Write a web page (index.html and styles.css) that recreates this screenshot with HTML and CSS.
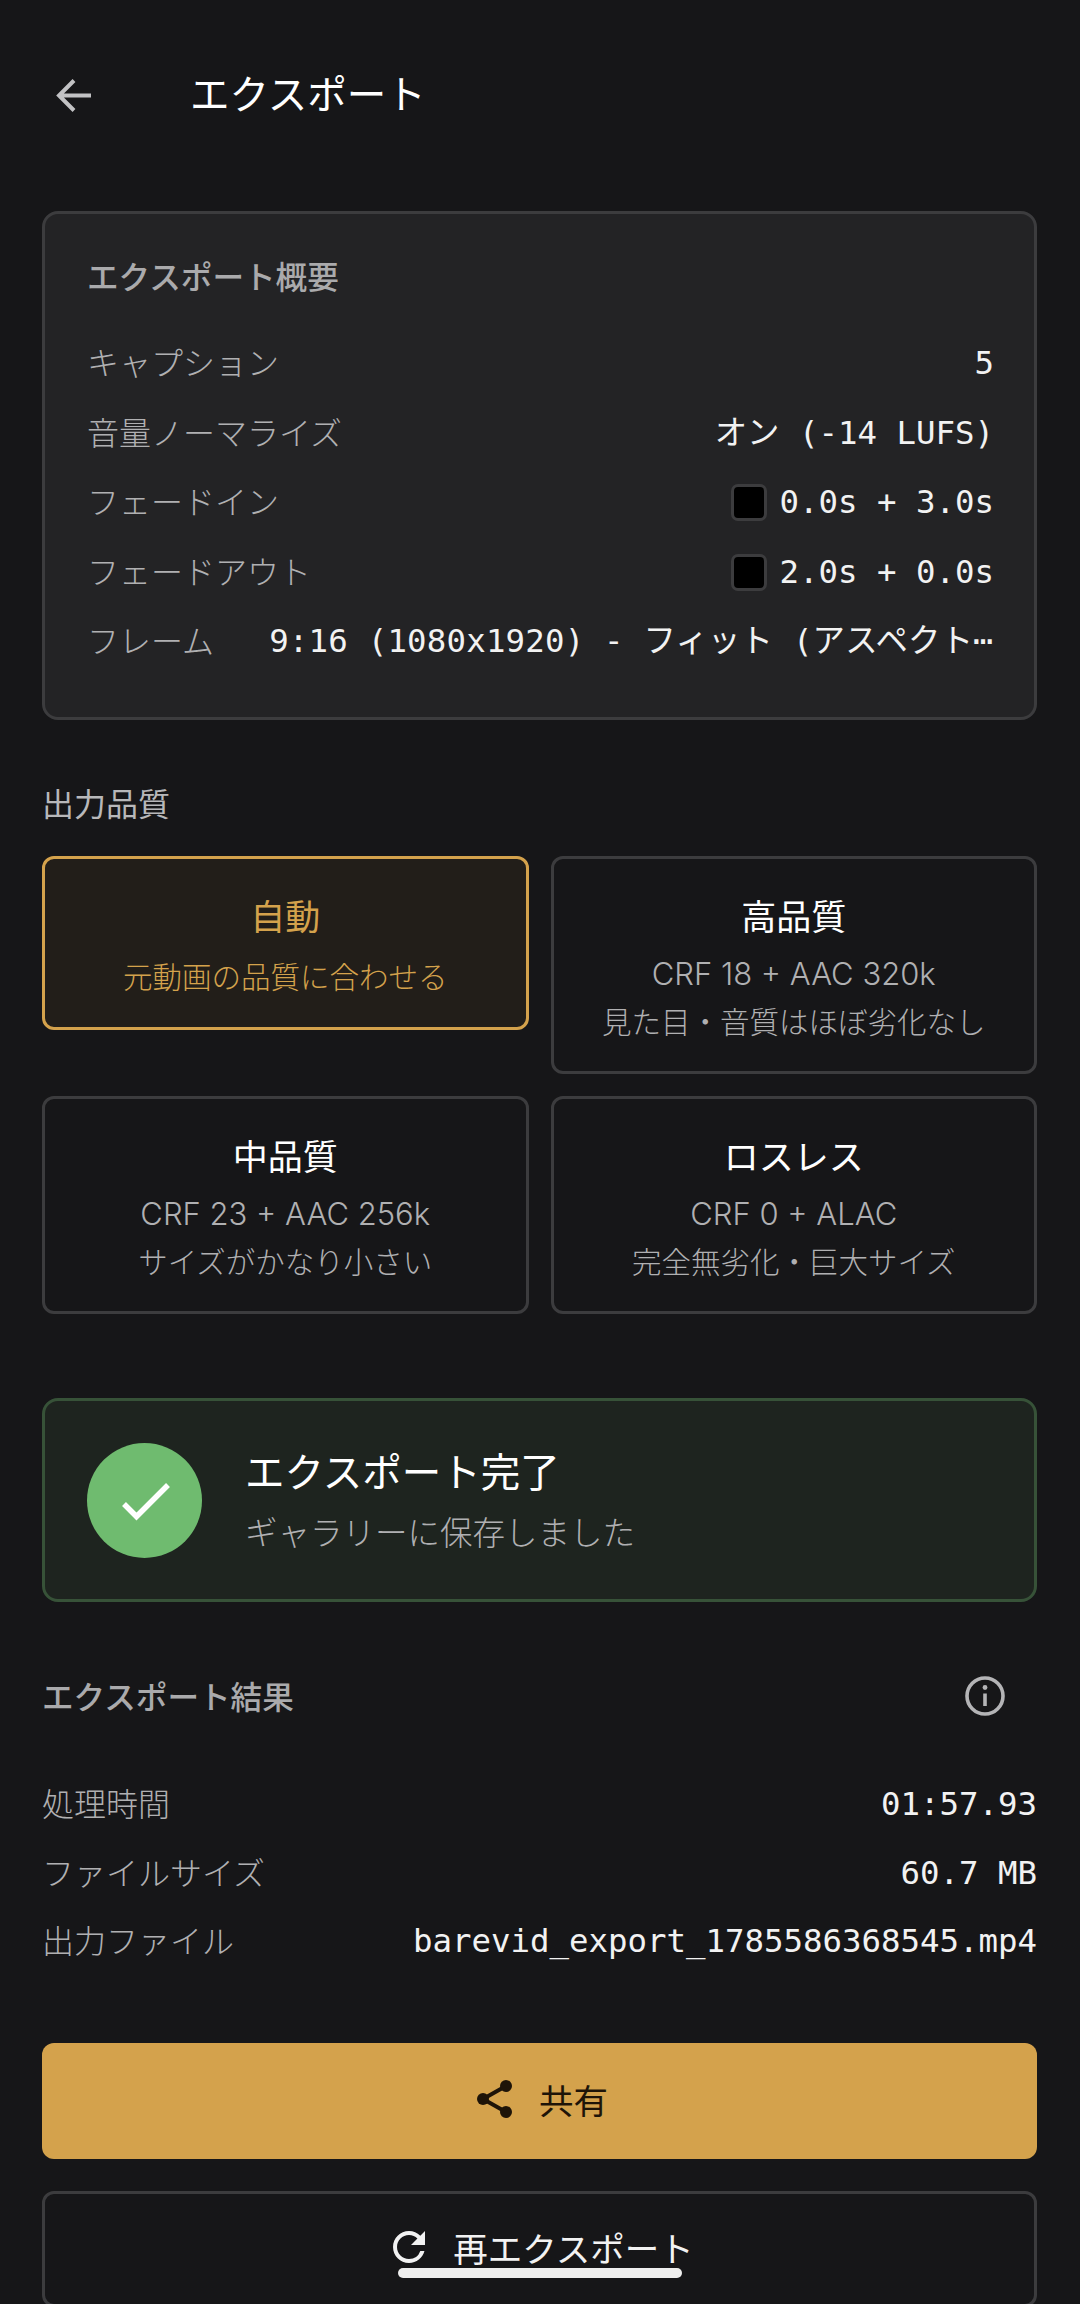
FILE: index.html
```html
<!DOCTYPE html>
<html lang="ja">
<head>
<meta charset="utf-8">
<title>エクスポート</title>
<link rel="stylesheet" href="styles.css">
</head>
<body>
<div class="page">
  <header class="topbar">
    <svg class="back-icon" viewBox="0 0 48 48" fill="none"><path d="M42 24.500H11M25 9.500 10 24.500l15 15" stroke="#c2c2c4" stroke-width="4"/></svg>
    <h1 class="topbar-title">エクスポート</h1>
  </header>

  <section class="summary">
    <h2 class="summary-title">エクスポート概要</h2>
    <div class="rows">
      <div class="row"><span class="label">キャプション</span><span class="value">5</span></div>
      <div class="row"><span class="label">音量ノーマライズ</span><span class="value">オン (-14 LUFS)</span></div>
      <div class="row"><span class="label">フェードイン</span><span class="value value-swatch"><i class="swatch"></i>0.0s + 3.0s</span></div>
      <div class="row"><span class="label">フェードアウト</span><span class="value value-swatch"><i class="swatch"></i>2.0s + 0.0s</span></div>
      <div class="row"><span class="label">フレーム</span><span class="value value-frame">9:16 (1080x1920) - フィット (アスペクト⋯</span></div>
    </div>
  </section>

  <h2 class="section-title">出力品質</h2>
  <div class="quality-grid">
    <div class="quality quality-on">
      <div class="q-title">自動</div>
      <div class="q-sub">元動画の品質に合わせる</div>
    </div>
    <div class="quality">
      <div class="q-title">高品質</div>
      <div class="q-spec">CRF 18 + AAC 320k</div>
      <div class="q-sub">見た目・音質はほぼ劣化なし</div>
    </div>
    <div class="quality">
      <div class="q-title">中品質</div>
      <div class="q-spec">CRF 23 + AAC 256k</div>
      <div class="q-sub">サイズがかなり小さい</div>
    </div>
    <div class="quality">
      <div class="q-title">ロスレス</div>
      <div class="q-spec">CRF 0 + ALAC</div>
      <div class="q-sub">完全無劣化・巨大サイズ</div>
    </div>
  </div>

  <section class="done">
    <div class="done-circle">
      <svg class="done-check" viewBox="0 0 115 115" fill="none"><path d="M37 61 49.500 73.500 81 42" stroke="#fff" stroke-width="5.500"/></svg>
    </div>
    <div class="done-text">
      <div class="done-title">エクスポート完了</div>
      <div class="done-sub">ギャラリーに保存しました</div>
    </div>
  </section>

  <div class="result-head">
    <h2 class="result-title">エクスポート結果</h2>
    <svg class="info-icon" viewBox="0 0 48 48" fill="none"><circle cx="24" cy="24" r="18" stroke="#b4b4b6" stroke-width="3.600"/><path d="M24 21.500V34" stroke="#b4b4b6" stroke-width="3.600"/><circle cx="24" cy="15.500" r="2.400" fill="#b4b4b6"/></svg>
  </div>
  <div class="result-rows">
    <div class="row"><span class="label">処理時間</span><span class="value">01:57.93</span></div>
    <div class="row"><span class="label">ファイルサイズ</span><span class="value">60.7 MB</span></div>
    <div class="row"><span class="label">出力ファイル</span><span class="value">barevid_export_1785586368545.mp4</span></div>
  </div>

  <button class="btn btn-primary">
    <svg class="btn-icon" viewBox="0 0 48 48" fill="none"><path d="M35 11 12 24l23 13" stroke="#1e1408" stroke-width="4"/><circle cx="35" cy="11" r="6" fill="#1e1408"/><circle cx="12" cy="24" r="6" fill="#1e1408"/><circle cx="35" cy="37" r="6" fill="#1e1408"/></svg>
    <span>共有</span>
  </button>
  <button class="btn btn-outline">
    <svg class="btn-icon" viewBox="0 0 24 24"><path fill="#f2f2f2" d="M17.650 6.350A7.958 7.958 0 0 0 12 4c-4.420 0-7.990 3.580-7.990 8s3.570 8 7.990 8c3.730 0 6.840-2.550 7.730-6h-2.080A5.990 5.990 0 0 1 12 18c-3.310 0-6-2.690-6-6s2.690-6 6-6c1.660 0 3.140.690 4.220 1.780L13 11h7V4l-2.350 2.350z"/></svg>
    <span>再エクスポート</span>
  </button>

  <div class="home-bar"></div>
</div>
</body>
</html>
```
FILE: styles.css
```css
* { box-sizing: border-box; }
html, body { margin: 0; padding: 0; }
body {
  width: 1080px;
  height: 2304px;
  overflow: hidden;
  background: #161618;
  font-family: Inter, "Noto Sans CJK JP", sans-serif;
  color: #f2f2f2;
}
h1, h2 { margin: 0; font: inherit; }
.page {
  position: relative;
  height: 2304px;
  padding: 0 43px 0 42px;
  overflow: hidden;
}
.topbar {
  display: flex;
  align-items: center;
  height: 190px;
  padding-left: 7px;
  gap: 93px;
}
.back-icon { width: 48px; height: 48px; flex: none; }
.topbar-title { font-size: 39.500px; font-weight: 400; line-height: 50px; color: #fff; }

.summary {
  margin-top: 21px;
  height: 509px;
  padding: 41px 40px 0 42px;
  background: #232325;
  border: 3px solid #3c3c3e;
  border-radius: 16px;
}
.summary-title { font-size: 31.600px; font-weight: 500; line-height: 46px; color: #aaaaac; }
.rows { margin-top: 39px; display: flex; flex-direction: column; gap: 22px; }
.row { display: flex; align-items: center; justify-content: space-between; height: 47.500px; gap: 40px; }
.label { flex: none; font-size: 32px; font-weight: 300; line-height: 47px; color: #b0b0b2; }
.value {
  font-family: "DejaVu Sans Mono", "Noto Sans CJK JP", monospace;
  font-size: 32.400px;
  line-height: 47px;
  color: #f2f2f2;
  white-space: nowrap;
}
.value-frame { letter-spacing: 0.200px; margin-right: 1px; }
.value-swatch { display: flex; align-items: center; gap: 12px; }
.swatch {
  display: block;
  width: 36px;
  height: 37px;
  background: #000;
  border: 3px solid #3c3c3e;
  border-radius: 7px;
}

.section-title {
  margin-top: 62px;
  font-size: 32px;
  font-weight: 400;
  line-height: 46px;
  color: #b8b8ba;
}
.quality-grid {
  margin-top: 28px;
  display: grid;
  grid-template-columns: 1fr 1fr;
  gap: 22px;
  align-items: start;
}
.quality {
  padding: 36px 6px 25px;
  text-align: center;
  border: 3px solid #3c3c3e;
  border-radius: 12px;
}
.q-title { font-size: 35px; font-weight: 400; line-height: 44px; color: #fff; margin-bottom: 11px; }
.q-sub { font-size: 29.500px; font-weight: 300; line-height: 48px; color: #b0b0b2; }
.q-spec { font-size: 31px; font-weight: 300; line-height: 48px; color: #b0b0b2; }
.quality-on { background: #221e19; border-color: #d4a24c; padding-top: 36px; padding-bottom: 26px; }
.quality-on .q-title { color: #d4a24c; margin-bottom: 14px; }
.quality-on .q-sub { color: #d4a24c; }

.done {
  margin-top: 84px;
  height: 204px;
  display: flex;
  align-items: center;
  padding-left: 42px;
  gap: 43px;
  background: #1e241f;
  border: 3px solid #375238;
  border-radius: 16px;
}
.done-circle { width: 115px; height: 115px; border-radius: 50%; background: #6fbb6f; flex: none; }
.done-check { display: block; width: 115px; height: 115px; }
.done-text { display: flex; flex-direction: column; gap: 13px; margin-top: 4px; }
.done-title { font-size: 39.500px; font-weight: 400; line-height: 50px; color: #fff; }
.done-sub { font-size: 32.500px; font-weight: 300; line-height: 46px; color: #b0b0b2; }

.result-head {
  margin-top: 48px;
  height: 96px;
  display: flex;
  align-items: center;
  justify-content: space-between;
  padding-right: 28px;
}
.result-title { font-size: 31.600px; font-weight: 500; line-height: 46px; color: #aaaaac; }
.info-icon { width: 48px; height: 48px; margin-top: -4px; }

.result-rows { margin-top: 35px; display: flex; flex-direction: column; gap: 21px; }

.btn {
  display: flex;
  align-items: center;
  justify-content: center;
  gap: 20px;
  width: 100%;
  height: 116px;
  font: inherit;
  font-size: 34.500px;
  font-weight: 400;
  border-radius: 12px;
  padding: 0 0 3px;
}
.btn-icon { width: 48px; height: 48px; flex: none; }
.btn-primary { margin-top: 77px; background: #d4a24c; border: 0; color: #1e1408; }
.btn-outline { margin-top: 32px; background: transparent; border: 3px solid #3c3c3e; color: #f2f2f2; }

.home-bar {
  position: absolute;
  left: 398px;
  top: 2268px;
  width: 284px;
  height: 10px;
  border-radius: 5px;
  background: #eeeeee;
}
```
